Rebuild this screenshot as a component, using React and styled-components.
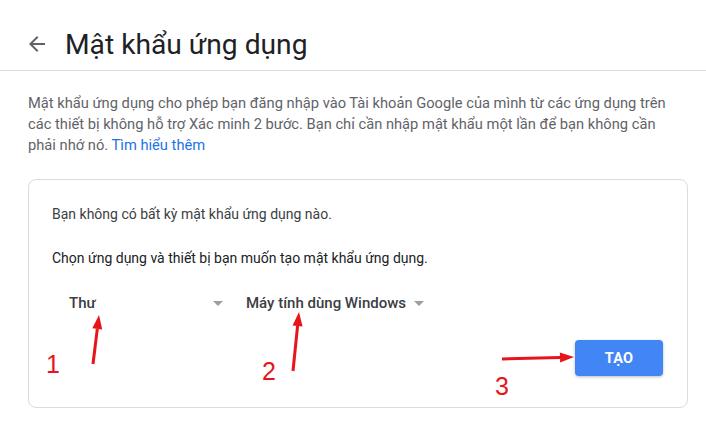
import React from 'react'
import styled, { createGlobalStyle } from 'styled-components'

const Global = createGlobalStyle`
  html, body { margin: 0; padding: 0; background: #fff; }
  body { font-family: Roboto, "Noto Sans", sans-serif; }
`

const Page = styled.div`
  position: relative;
  width: 706px;
  height: 439px;
  overflow: hidden;
`

const Header = styled.header`
  display: flex;
  align-items: center;
  gap: 16px;
  height: 71px;
  padding: 18px 0 0 25px;
  box-sizing: border-box;
  border-bottom: 1px solid #dadce0;
`

const Title = styled.h1`
  margin: 0;
  font-family: Roboto, "Open Sans", sans-serif;
  font-size: 28.2px;
  font-weight: 400;
  color: #202124;
`

const Intro = styled.p`
  margin: 22px 10px 0 28px;
  font-size: 14.7px;
  line-height: 21px;
  color: #5f6368;
  white-space: nowrap;
`

const Link = styled.a`
  color: #1a73e8;
  text-decoration: none;
`

const Card = styled.section`
  margin: 23px 18px 0 28px;
  height: 229px;
  box-sizing: border-box;
  border: 1px solid #dadce0;
  border-radius: 8px;
  padding: 24px 24px 0 23px;
  display: flex;
  flex-direction: column;
`

const Note = styled.p`
  margin: 0;
  font-size: 14px;
  line-height: 20px;
  color: ${({ $strong }) => ($strong ? '#202124' : '#3c4043')};
  & + & { margin-top: 24px; }
`

const Selects = styled.div`
  display: flex;
  gap: 1px;
  margin-top: 18px;
`

const Select = styled.div`
  display: flex;
  align-items: center;
  justify-content: space-between;
  width: ${({ $w }) => $w}px;
  height: 34px;
  padding: 0 5px 0 17px;
  box-sizing: border-box;
  font-size: 15px;
  font-weight: 500;
  color: #3c4043;
`

const Caret = styled.span`
  width: 0;
  height: 0;
  border-left: 5.5px solid transparent;
  border-right: 5.5px solid transparent;
  border-top: 5px solid #9aa0a6;
`

const Actions = styled.div`
  display: flex;
  justify-content: flex-end;
  margin-top: 20px;
`

const Button = styled.button`
  width: 88px;
  height: 36px;
  border: none;
  border-radius: 4px;
  background: #4285f4;
  color: #fff;
  font-family: Roboto, sans-serif;
  font-size: 14.5px;
  font-weight: 700;
  letter-spacing: 0.3px;
  box-shadow: 0 1px 3px rgba(60, 64, 67, 0.35);
`

const Mark = styled.span`
  position: absolute;
  left: ${({ $x }) => $x}px;
  top: ${({ $y }) => $y}px;
  font-family: "Liberation Sans", Arial, sans-serif;
  font-size: 25px;
  line-height: 1;
  color: #e8141c;
`

const Overlay = styled.svg`
  position: absolute;
  left: 0;
  top: 0;
  pointer-events: none;
`

const Arrow = ({ x1, y1, x2, y2 }) => {
  const a = Math.atan2(y2 - y1, x2 - x1)
  const len = 14
  const w = 5
  const bx = x2 - Math.cos(a) * len
  const by = y2 - Math.sin(a) * len
  const px = -Math.sin(a) * w
  const py = Math.cos(a) * w
  return (
    <g>
      <line x1={x1} y1={y1} x2={bx} y2={by} stroke="#e8141c" strokeWidth="3" />
      <polygon points={`${x2},${y2} ${bx + px},${by + py} ${bx - px},${by - py}`} fill="#e8141c" />
    </g>
  )
}

export default function App() {
  return (
    <Page>
      <Global />
      <Header>
        <svg width="24" height="24" viewBox="0 0 24 24">
          <path d="M20 11H7.83l5.59-5.59L12 4l-8 8 8 8 1.41-1.41L7.83 13H20v-2z" fill="#5f6368" />
        </svg>
        <Title>Mật khẩu ứng dụng</Title>
      </Header>
      <Intro>
        Mật khẩu ứng dụng cho phép bạn đăng nhập vào Tài khoản Google của mình từ các ứng dụng trên<br />
        các thiết bị không hỗ trợ Xác minh 2 bước. Bạn chỉ cần nhập mật khẩu một lần để bạn không cần<br />
        phải nhớ nó. <Link href="#">Tìm hiểu thêm</Link>
      </Intro>
      <Card>
        <Note>Bạn không có bất kỳ mật khẩu ứng dụng nào.</Note>
        <Note $strong>Chọn ứng dụng và thiết bị bạn muốn tạo mật khẩu ứng dụng.</Note>
        <Selects>
          <Select $w={176}>Thư<Caret /></Select>
          <Select $w={200}>Máy tính dùng Windows<Caret /></Select>
        </Selects>
        <Actions>
          <Button>TẠO</Button>
        </Actions>
      </Card>
      <Overlay width="706" height="439">
        <Arrow x1={93} y1={364} x2={99} y2={315} />
        <Arrow x1={293} y1={371} x2={299} y2={312} />
        <Arrow x1={502} y1={359} x2={574} y2={357} />
      </Overlay>
      <Mark $x={46} $y={352}>1</Mark>
      <Mark $x={262} $y={359}>2</Mark>
      <Mark $x={495} $y={374}>3</Mark>
    </Page>
  )
}
